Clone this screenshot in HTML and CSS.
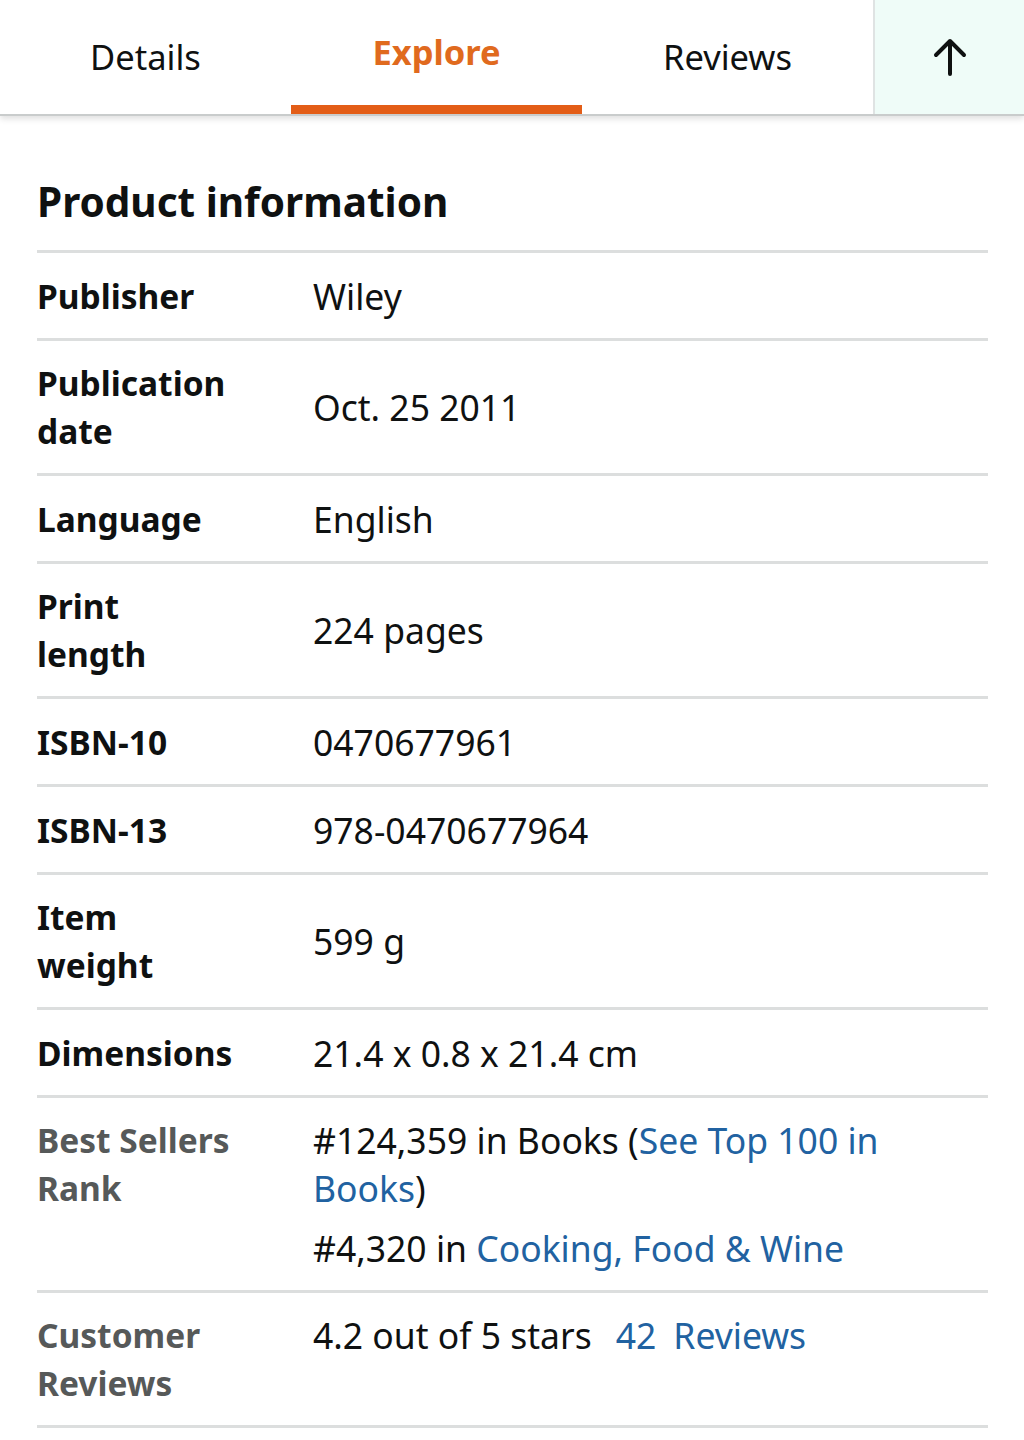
FILE: index.html
```html
<!DOCTYPE html>
<html lang="en">
<head>
<meta charset="utf-8">
<title>Product information</title>
<link rel="stylesheet" href="styles.css">
</head>
<body>
<nav class="tabbar">
  <div class="tab">Details</div>
  <div class="tab active">Explore</div>
  <div class="tab">Reviews</div>
  <div class="top-btn">
    <svg width="34" height="38" viewBox="0 0 34 38" aria-hidden="true">
      <path d="M17 36 V3 M3 17 L17 3 L31 17" fill="none" stroke="#0f1111" stroke-width="4" stroke-linecap="round" stroke-linejoin="round"/>
    </svg>
  </div>
</nav>
<main class="content">
  <h2 class="title">Product information</h2>
  <div class="table">
    <div class="row"><div class="label">Publisher</div><div class="value">Wiley</div></div>
    <div class="row"><div class="label">Publication date</div><div class="value">Oct. 25 2011</div></div>
    <div class="row"><div class="label">Language</div><div class="value">English</div></div>
    <div class="row"><div class="label">Print length</div><div class="value">224 pages</div></div>
    <div class="row"><div class="label">ISBN-10</div><div class="value">0470677961</div></div>
    <div class="row"><div class="label">ISBN-13</div><div class="value">978-0470677964</div></div>
    <div class="row"><div class="label">Item weight</div><div class="value">599 g</div></div>
    <div class="row"><div class="label">Dimensions</div><div class="value">21.4 x 0.8 x 21.4 cm</div></div>
    <div class="row top"><div class="label muted">Best Sellers Rank</div>
      <div class="value">
        <ul class="ranks">
          <li>#124,359 in Books (<a href="#">See Top 100 in Books</a>)</li>
          <li>#4,320 in <a href="#">Cooking, Food &amp; Wine</a></li>
        </ul>
      </div>
    </div>
    <div class="row top"><div class="label muted">Customer Reviews</div>
      <div class="value">4.2 out of 5 stars<a class="reviews-link" href="#">42<span class="gap"></span>Reviews</a></div>
    </div>
  </div>
</main>
</body>
</html>
```
FILE: styles.css
```css
* { box-sizing: border-box; }
body {
  margin: 0;
  background: #fff;
  font-family: "Noto Sans", "Open Sans", sans-serif;
  color: #0f1111;
}
.tabbar {
  display: flex;
  height: 116px;
  border-bottom: 2px solid #c9cccc;
  box-shadow: 0 3px 6px rgba(0,0,0,0.12);
}
.tab {
  width: 291px;
  display: flex;
  align-items: center;
  justify-content: center;
  font-size: 34.5px;
  padding-top: 9px;
  padding-bottom: 2px;
  border-bottom: 9px solid transparent;
}
.tab.active {
  color: #e06a1e;
  font-weight: 700;
  border-bottom-color: #e35d17;
  padding-top: 4px;
  padding-bottom: 7px;
}
.top-btn {
  flex: 1;
  background: #effcf8;
  border-left: 2px solid #dfe3e3;
  display: flex;
  align-items: center;
  justify-content: center;
}
.content {
  padding: 58px 36px 0 37px;
}
.title {
  margin: 0;
  font-size: 40.5px;
  font-weight: 700;
  line-height: 56px;
  padding-bottom: 20px;
}
.table {
  border-top: 3px solid #dcdede;
}
.row {
  display: flex;
  align-items: center;
  padding: 18px 0;
  border-bottom: 3px solid #dcdede;
  line-height: 48px;
  min-height: 88px;
}
.row.top { align-items: flex-start; }
.label {
  width: 276px;
  flex: none;
  font-weight: 700;
  font-size: 33.5px;
  padding-right: 80px;
}
.label.muted { color: #565959; }
.value {
  font-size: 35.5px;
  padding-right: 10px;
}
.ranks {
  list-style: none;
  margin: 0;
  padding: 0;
}
.ranks li + li { margin-top: 12px; }
a { color: #2162a1; text-decoration: none; }
.reviews-link { margin-left: 24px; }
.gap { display: inline-block; width: 17px; }
```
